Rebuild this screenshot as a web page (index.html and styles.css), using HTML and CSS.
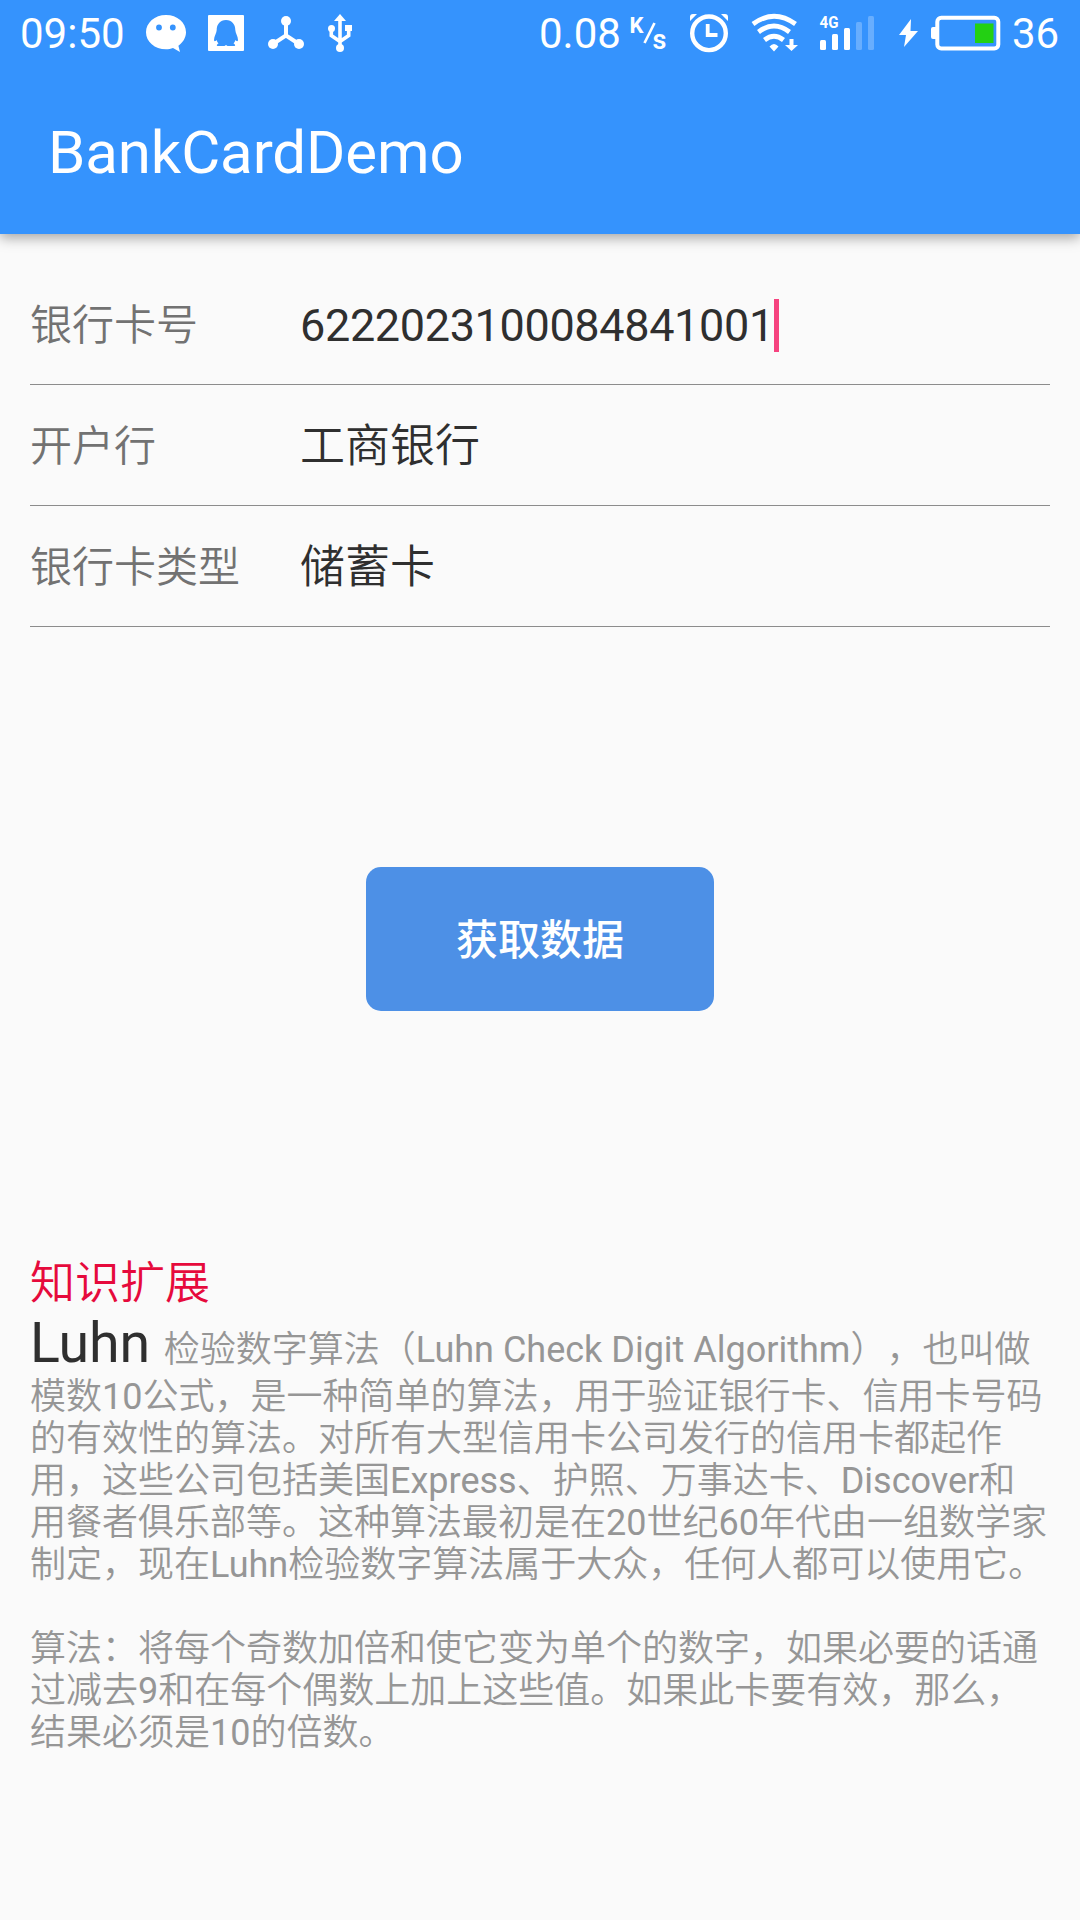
FILE: index.html
```html
<!DOCTYPE html>
<html lang="zh-CN">
<head>
<meta charset="utf-8">
<title>BankCardDemo</title>
<link rel="stylesheet" href="styles.css">
</head>
<body>
<header class="header">
  <div class="status">
    <div class="status-group">
      <span class="status-text clock">09:50</span>
      <svg class="ico-chat" width="42" height="64" viewBox="145 0 42 64">
        <path fill="#fff" fill-rule="evenodd" d="M166 15c11.300 0 20 7.600 20 17.300 0 5.500-3.200 10.400-7.600 13.500L180 52l-7-4c-2.200.9-4.400 1.300-7 1.300-11.300 0-20-7.500-20-17S154.700 15 166 15zM159 24.600a2.900 2.900 0 1 0 0 5.800a2.900 2.900 0 1 0 0-5.800zM172.800 24.600a2.900 2.900 0 1 0 0 5.800a2.900 2.900 0 1 0 0-5.800z"/>
      </svg>
      <svg class="ico-qq" width="36" height="64" viewBox="208 0 36 64">
        <rect x="208" y="15" width="36" height="36" rx="1" fill="#fff"/>
        <path fill="#3593fd" d="M226 20c-6 0-9.300 4.500-9.300 10 0 3-2.700 6-2.700 10 0 1 1 2 2.500 0 .5 1.500 1.200 2.600 2 3.500-1.800.8-2.300 2.500-.5 2.500h6.500l1.500-1 1.500 1H234c1.800 0 1.300-1.700-.5-2.500.8-.9 1.500-2 2-3.500 1.500 2 2.500 1 2.500 0 0-4-2.700-7-2.700-10 0-5.500-3.300-10-9.300-10z"/>
      </svg>
      <svg class="ico-node" width="38" height="64" viewBox="267 0 38 64">
        <path fill="none" stroke="#fff" stroke-width="4" d="M286 21V35.500L273 44M286 35.500L299 44"/>
        <g fill="#fff"><circle cx="286" cy="21" r="5"/><circle cx="273" cy="44" r="5"/><circle cx="299" cy="44" r="5"/></g>
      </svg>
      <svg class="ico-usb" width="26" height="64" viewBox="327 0 26 64">
        <path fill="none" stroke="#fff" stroke-width="3.600" d="M340 18V48M331.300 29V35.500L340 41.500M348.700 29V35.500L340 41.500"/>
        <g fill="#fff"><path d="M340 14l6 7h-12z"/><circle cx="340" cy="48" r="4"/><circle cx="331.500" cy="28.500" r="3.500"/><path d="M345 25h7v6h-7z"/></g>
      </svg>
    </div>
    <div class="status-group">
      <span class="status-text speed">0.08</span>
      <svg class="ico-rate" width="38" height="64" viewBox="629 0 38 64">
        <text class="rate-k" x="629.500" y="32.500">K</text>
        <path stroke="#fff" stroke-width="2.600" d="M654.500 23L644.500 43"/>
        <text class="rate-s" x="652.500" y="48.500">s</text>
      </svg>
      <svg class="ico-alarm" width="40" height="64" viewBox="689 0 40 64">
        <circle cx="709" cy="33.300" r="16.800" fill="none" stroke="#fff" stroke-width="4.400"/>
        <path fill="none" stroke="#fff" stroke-width="3.800" d="M707.700 24V35H717.500"/>
        <path fill="#fff" d="M690 21v-4q0-3 3-3h4zM728 21v-4q0-3-3-3h-4z"/>
      </svg>
      <svg class="ico-wifi" width="48" height="64" viewBox="751 0 48 64">
        <g fill="none" stroke="#fff" stroke-width="4.800"><path d="M753 24Q774 8.500 795.500 24"/><path d="M758.500 32Q774 20 789.500 32"/><path d="M764.500 40Q774 32.500 783.500 40"/></g>
        <path fill="#fff" d="M774 51.500l-4.500-5q4.500-5 9 0zM789.500 39h4v6h4.500l-6.500 6-6.500-6h4.500z"/>
      </svg>
      <svg class="ico-signal" width="56" height="64" viewBox="819 0 56 64">
        <text class="net-type" x="819.500" y="27.500" textLength="19" lengthAdjust="spacingAndGlyphs">4G</text>
        <g fill="#fff"><rect x="820" y="40" width="6" height="10" rx="1.500"/><rect x="832" y="34" width="6" height="16" rx="1.500"/><rect x="844" y="28" width="6" height="22" rx="1.500"/></g>
        <g fill="#68aefe"><rect x="856" y="22" width="6" height="28" rx="1.500"/><rect x="868" y="16" width="6" height="34" rx="1.500"/></g>
      </svg>
      <svg class="ico-bolt" width="20" height="64" viewBox="899 0 20 64">
        <path fill="#fff" d="M911 19L899 35h7l-2 12L918 31h-7.500z"/>
      </svg>
      <svg class="ico-battery" width="70" height="64" viewBox="931 0 70 64">
        <rect x="937.300" y="17.800" width="61" height="30.600" rx="4" fill="none" stroke="#fff" stroke-width="4"/>
        <path fill="#fff" d="M937 27h-4q-2 0-2 2v8q0 2 2 2h4z"/>
        <rect x="975" y="23.500" width="18.500" height="19.500" fill="#23d013"/>
      </svg>
      <span class="status-text level">36</span>
    </div>
  </div>
  <h1 class="title">BankCardDemo</h1>
</header>
<main class="main">
  <section class="form">
    <div class="row"><span class="label">银行卡号</span><span class="value number">6222023100084841001</span><i class="caret"></i></div>
    <div class="row"><span class="label">开户行</span><span class="value">工商银行</span></div>
    <div class="row"><span class="label">银行卡类型</span><span class="value">储蓄卡</span></div>
  </section>
  <button class="button" type="button">获取数据</button>
  <section class="about">
    <h2 class="about-title">知识扩展</h2>
    <p class="lead"><span class="luhn">Luhn </span>检验数字算法（<span class="latin">Luhn Check Digit Algorithm</span>），也叫做</p>
    <p class="text">模数<span class="latin">10</span>公式，是一种简单的算法，用于验证银行卡、信用卡号码<br>的有效性的算法。对所有大型信用卡公司发行的信用卡都起作<br>用，这些公司包括美国<span class="latin">Express</span>、护照、万事达卡、<span class="latin">Discover</span>和<br>用餐者俱乐部等。这种算法最初是在<span class="latin">20</span>世纪<span class="latin">60</span>年代由一组数学家<br>制定，现在<span class="latin">Luhn</span>检验数字算法属于大众，任何人都可以使用它。<br><br>算法：将每个奇数加倍和使它变为单个的数字，如果必要的话通<br>过减去<span class="latin">9</span>和在每个偶数上加上这些值。如果此卡要有效，那么，<br>结果必须是<span class="latin">10</span>的倍数。</p>
  </section>
</main>
</body>
</html>
```
FILE: styles.css
```css
* { box-sizing: border-box; }

body {
  margin: 0;
  width: 1080px;
  height: 1920px;
  overflow: hidden;
  background: #fafafa;
  color: #2f2f2f;
  font-family: Roboto, "Noto Sans CJK SC", sans-serif;
  text-spacing-trim: space-all;
}

h1, h2, p { margin: 0; font-weight: 400; }

.header {
  height: 234px;
  background: #3593fd;
  color: #fff;
  box-shadow: 0 4px 12px rgba(0, 0, 0, .34);
}

.status {
  display: flex;
  justify-content: space-between;
  height: 64px;
  padding: 0 20px;
}

.status-group { display: flex; }
.status svg { display: block; flex: none; }

.status-text { font-size: 42px; line-height: 68px; white-space: nowrap; }

.clock { width: 125px; }
.ico-qq { margin-left: 21px; }
.ico-node { margin-left: 23px; }
.ico-usb { margin-left: 22px; }
.speed { width: 90px; }
.ico-alarm { margin-left: 22px; }
.ico-wifi { margin-left: 22px; }
.ico-signal { margin-left: 20px; }
.ico-bolt { margin-left: 24px; }
.ico-battery { margin-left: 12px; }
.level { width: 48px; margin-left: 11px; }

.rate-k { fill: #fff; font-size: 22px; font-weight: 700; }
.rate-s { fill: #fff; font-size: 27px; font-weight: 600; }
.net-type { fill: #fff; font-size: 16px; font-weight: 700; }

.title {
  padding: 54px 0 0 48px;
  font-size: 60px;
  line-height: 70px;
  letter-spacing: -.1px;
}

.main {
  display: flex;
  flex-direction: column;
  padding: 30px 30px 0;
}

.row {
  display: flex;
  align-items: center;
  height: 121px;
  border-bottom: 1px solid #8c8c8c;
}

.label, .value { padding-bottom: 5px; font-weight: 350; }
.label { width: 270px; font-size: 42px; color: #727272; }
.value { font-size: 45px; }
.number { padding: 2px 0 0; letter-spacing: -.35px; font-weight: 400; }
.caret { width: 5px; height: 53px; margin-top: 2px; background: #f6437f; }

.button {
  align-self: center;
  width: 348px;
  height: 144px;
  margin-top: 240px;
  padding: 0 0 5px;
  border: 0;
  border-radius: 15px;
  background: #4d90e6;
  color: #fff;
  font: 500 42px Roboto, "Noto Sans CJK SC", sans-serif;
}

.about { margin-top: 246px; white-space: nowrap; }

.about-title { font-size: 45px; font-weight: 350; line-height: 53px; color: #e60a3c; }

.lead, .text { font-size: 36px; font-weight: 350; color: #969696; }
.lead { height: 66px; line-height: 67px; }
.luhn { font-size: 55.5px; font-weight: 400; letter-spacing: -.1px; color: #2f2f2f; }
.latin { font-weight: 400; }
.text { line-height: 42px; }
```
